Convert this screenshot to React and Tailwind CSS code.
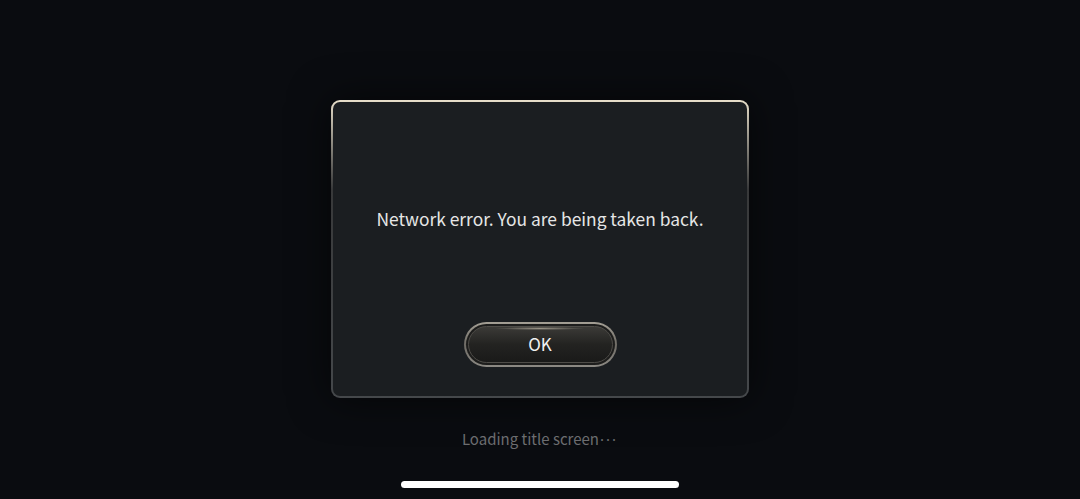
import React from "react";

export default function App() {
  return (
    <div
      className="relative w-full h-[499px] overflow-hidden bg-[#0a0c10] flex flex-col items-center"
      style={{ fontFamily: '"Noto Sans CJK JP", "Noto Sans", sans-serif' }}
    >
      {/* Dialog */}
      <div className="mt-[100px] w-[418px] h-[298px] rounded-[9px] p-[2px] bg-gradient-to-b from-[#e8dfca] via-[#38393a] via-30% to-[#45484b] shadow-[0_0_40px_rgba(0,0,0,0.6)]">
        <div className="w-full h-full rounded-[7px] bg-[#1b1e21] flex flex-col items-center">
          <p className="mt-[105px] text-[17.4px] leading-[24px] text-[#e6e6e6]">
            Network error. You are being taken back.
          </p>

          <button className="mt-[91px] w-[153px] h-[45px] rounded-full p-[2px] bg-gradient-to-b from-[#a49f95] via-[#6f6c66] to-[#8d8a84]">
            <div className="w-full h-full rounded-full p-[2px] bg-[#1d1d1c]">
              <div className="relative w-full h-full rounded-full border border-[#4e4c48] bg-gradient-to-b from-[#3b3a37] via-[#232321] to-[#1a1a19] flex items-center justify-center">
                <div className="absolute top-0 left-1/2 -translate-x-1/2 w-[90px] h-[3px] rounded-full bg-[radial-gradient(ellipse_at_center,rgba(230,220,200,0.55),transparent_70%)]" />
                <span className="-mt-[3px] text-[17px] leading-none text-[#f0f0f0] font-normal">OK</span>
              </div>
            </div>
          </button>
        </div>
      </div>

      <p className="mt-[31px] text-[15px] leading-[20px] text-[#6c6d70]">
        Loading title screen
        <span className="ml-[1px] tracking-[2px]" style={{ fontFamily: '"Noto Sans", sans-serif' }}>···</span>
      </p>

      <div className="mt-[32px] w-[278px] h-[7px] rounded-full bg-white" />
    </div>
  );
}
